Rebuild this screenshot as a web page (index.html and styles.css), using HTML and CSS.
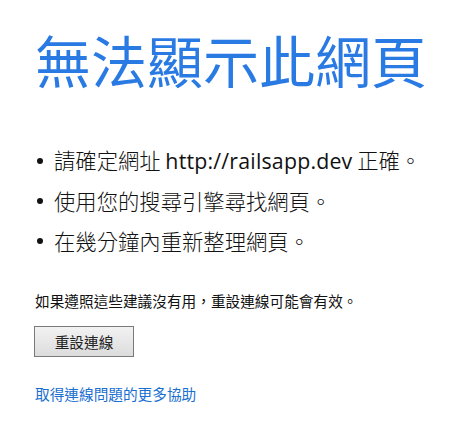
FILE: index.html
```html
<!DOCTYPE html>
<html lang="zh-Hant">
<head>
<meta charset="utf-8">
<title>無法顯示此網頁</title>
<link rel="stylesheet" href="styles.css">
</head>
<body>
<main class="page">
  <h1 class="title">無法顯示此網頁</h1>
  <ul class="tips">
    <li class="tip"><span>請確定網址 <span class="url">http://railsapp.dev</span> 正確。</span></li>
    <li class="tip"><span>使用您的搜尋引擎尋找網頁。</span></li>
    <li class="tip"><span>在幾分鐘內重新整理網頁。</span></li>
  </ul>
  <p class="note">如果遵照這些建議沒有用，重設連線可能會有效。</p>
  <button class="reset" type="button">重設連線</button>
  <a class="help" href="#">取得連線問題的更多協助</a>
</main>
</body>
</html>
```

FILE: styles.css
```css
html, body {
  margin: 0;
  padding: 0;
  background: #ffffff;
}

.page {
  display: flex;
  flex-direction: column;
  align-items: flex-start;
  padding: 31px 0 0 35px;
  font-family: "Noto Sans CJK TC", "Noto Sans", sans-serif;
  color: #1a1a1a;
}

.title {
  margin: 0;
  font-size: 56px;
  line-height: 55px;
  font-weight: 400;
  color: #2a7ae4;
  letter-spacing: 0;
}

.tips {
  list-style: none;
  margin: 54px 0 0 0;
  padding: 0;
}

.tip {
  display: flex;
  align-items: center;
  gap: 11px;
  font-size: 21.33px;
  line-height: 40px;
  font-weight: 300;
  color: #111;
}

.tip::before {
  content: "";
  width: 6px;
  height: 6px;
  border-radius: 50%;
  background: #111;
  margin-left: 2px;
  flex: none;
}

.url {
  font-family: "Open Sans", "Noto Sans", sans-serif;
  font-weight: 400;
  letter-spacing: 0.2px;
}

.note {
  margin: 30px 0 0 0;
  font-size: 11pt;
  line-height: 20px;
  color: #111;
}

.reset {
  margin: 15px 0 0 -1px;
  width: 100px;
  height: 31px;
  padding: 0;
  border: 1px solid #7a7a7a;
  background: linear-gradient(#f2f2f2, #dcdcdc);
  font-family: "Noto Sans CJK TC", sans-serif;
  font-size: 11pt;
  color: #222;
}

.help {
  margin-top: 27px;
  font-size: 11pt;
  line-height: 20px;
  color: #1a6fd0;
  text-decoration: none;
}
```
